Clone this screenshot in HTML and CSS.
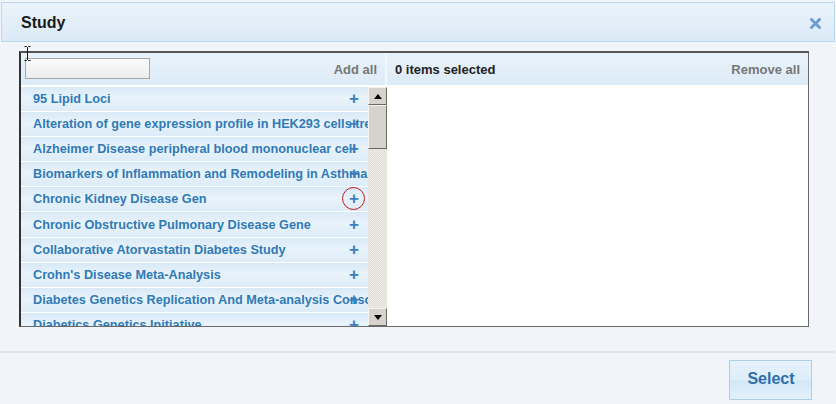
FILE: index.html
```html
<!DOCTYPE html>
<html>
<head>
<meta charset="utf-8">
<link rel="stylesheet" href="styles.css">
</head>
<body>
<div class="dialog">
  <div class="titlebar">
    <span class="title">Study</span>
    <svg class="close" width="11" height="11" viewBox="0 0 11 11"><path d="M1.5 1.5l8 8M9.5 1.5l-8 8" stroke="#6e9ecf" stroke-width="3" stroke-linecap="round"/></svg>
  </div>
  <div class="content">
    <div class="picker">
      <div class="left">
        <div class="lhead">
          <input class="search" type="text">
          <span class="addall">Add all</span>
        </div>
        <div class="listwrap">
          <div class="rows">
            <div class="row"><span class="label">95 Lipid Loci</span><span class="plus">+</span></div>
            <div class="row"><span class="label">Alteration of gene expression profile in HEK293 cells treated</span><span class="plus">+</span></div>
            <div class="row"><span class="label">Alzheimer Disease peripheral blood mononuclear cell</span><span class="plus">+</span></div>
            <div class="row"><span class="label">Biomarkers of Inflammation and Remodeling in Asthma</span><span class="plus">+</span></div>
            <div class="row"><span class="label">Chronic Kidney Disease Gen</span><span class="plus circled">+</span></div>
            <div class="row"><span class="label">Chronic Obstructive Pulmonary Disease Gene</span><span class="plus">+</span></div>
            <div class="row"><span class="label">Collaborative Atorvastatin Diabetes Study</span><span class="plus">+</span></div>
            <div class="row"><span class="label">Crohn's Disease Meta-Analysis</span><span class="plus">+</span></div>
            <div class="row"><span class="label">Diabetes Genetics Replication And Meta-analysis Consortium</span><span class="plus">+</span></div>
            <div class="row"><span class="label">Diabetics Genetics Initiative</span><span class="plus">+</span></div>
          </div>
          <div class="scrollbar">
            <div class="sbtn"><span class="arrow up"></span></div>
            <div class="thumb"></div>
            <div class="track"></div>
            <div class="sbtn"><span class="arrow down"></span></div>
          </div>
        </div>
      </div>
      <div class="right">
        <div class="rhead">
          <span class="count">0 items selected</span>
          <span class="removeall">Remove all</span>
        </div>
        <div class="selected"></div>
      </div>
    </div>
    <svg class="ibeam" width="7" height="15" viewBox="0 0 7 15"><path d="M0.5 0.5h2l1 1 1-1h2M3.5 1.5v12M0.5 14.5h2l1-1 1 1h2" fill="none" stroke="#111" stroke-width="1"/></svg>
  </div>
  <div class="footer">
    <button class="select">Select</button>
  </div>
</div>
</body>
</html>
```
FILE: styles.css
```css
html, body {
  margin: 0;
  padding: 0;
}
body {
  background: #f1f4f8;
  font-family: "Liberation Sans", Arial, sans-serif;
  width: 836px;
  height: 404px;
  overflow: hidden;
}
.dialog {
  padding-top: 2px;
}
.titlebar {
  margin: 0 1px;
  height: 38px;
  border: 1px solid #bcd8ee;
  background: linear-gradient(#eaf3fb, #dbeaf6);
  display: flex;
  align-items: center;
  justify-content: space-between;
  padding: 0 13px 0 19px;
}
.title {
  font-size: 16px;
  font-weight: bold;
  color: #1a1a1a;
  margin-top: 1px;
}
.close {
  margin-top: 3px;
}
.content {
  position: relative;
  padding: 9px 0 0 19px;
}
.picker {
  width: 787px;
  height: 273px;
  border: 1px solid #6a6a6a;
  border-left: 2px solid #333;
  border-top: 2px solid #555;
  display: flex;
  background: #fff;
}
.left {
  width: 366px;
  display: flex;
  flex-direction: column;
}
.lhead, .rhead {
  height: 32px;
  background: linear-gradient(#e9f2fa, #dcebf7);
  display: flex;
  align-items: center;
  justify-content: space-between;
  box-sizing: border-box;
  font-size: 13px;
  font-weight: bold;
}
.lhead {
  padding: 0 8px 0 4px;
  border-right: 2px solid #f4f8fc;
}
.search {
  width: 125px;
  height: 21px;
  box-sizing: border-box;
  border: 1px solid #a8a8a8;
  background: linear-gradient(#fbfbfb, #ececec);
  margin: 0 0 1px 0;
  padding: 0;
}
.addall, .removeall {
  color: #777;
}
.rhead {
  padding: 0 8px 0 8px;
}
.count {
  color: #222;
}
.right {
  flex: 1;
  display: flex;
  flex-direction: column;
}
.selected {
  flex: 1;
  background: #fff;
}
.listwrap {
  flex: 1;
  display: flex;
  overflow: hidden;
  border-top: 2px solid #fff;
}
.rows {
  width: 347px;
  overflow: hidden;
  display: flex;
  flex-direction: column;
  gap: 1px;
  background: #fff;
}
.row {
  flex: none;
  height: 24.1px;
  display: grid;
  grid-template-columns: 1fr;
  align-items: center;
  background: linear-gradient(#d8e9f7, #e9f3fb 45%, #dcecf8);
}
.label, .plus {
  grid-area: 1 / 1;
}
.label {
  padding-left: 12px;
  font-size: 12.7px;
  font-weight: bold;
  color: #2f7ab7;
  white-space: nowrap;
  overflow: hidden;
}
.plus {
  justify-self: end;
  margin-right: 6px;
  width: 16px;
  text-align: center;
  font-size: 17px;
  font-weight: bold;
  color: #3a80c0;
  line-height: 16px;
  position: relative;
}
.circled::after {
  content: "";
  position: absolute;
  left: -4px;
  top: -4px;
  width: 21px;
  height: 21px;
  border: 1.5px solid #c8181e;
  border-radius: 50%;
}
.scrollbar {
  width: 19px;
  display: flex;
  flex-direction: column;
  background: #e9e7e2;
}
.sbtn {
  flex: none;
  height: 18px;
  box-sizing: border-box;
  background: #d6d3cc;
  border: 1px solid;
  border-color: #f4f3f0 #6b6964 #6b6964 #f4f3f0;
  display: flex;
  align-items: center;
  justify-content: center;
}
.arrow {
  width: 0;
  height: 0;
  border-left: 4px solid transparent;
  border-right: 4px solid transparent;
}
.arrow.up {
  border-bottom: 5px solid #000;
}
.arrow.down {
  border-top: 5px solid #000;
}
.thumb {
  flex: none;
  height: 44px;
  box-sizing: border-box;
  background: #d6d3cc;
  border: 1px solid;
  border-color: #f4f3f0 #6b6964 #6b6964 #f4f3f0;
}
.track {
  flex: 1;
  background-color: #e6e4de;
  background-image: repeating-conic-gradient(#efeee9 0 25%, #dddbd4 0 50%);
  background-size: 2px 2px;
}
.ibeam {
  position: absolute;
  left: 24px;
  top: 4px;
}
.footer {
  margin: 24px 1px 0;
  border-top: 2px solid #e1e5ea;
  display: flex;
  justify-content: flex-end;
  padding: 7px 23px 0 0;
}
.select {
  width: 83px;
  height: 40px;
  border: 1px solid #a9cfee;
  background: linear-gradient(#e6f2fc, #ddedf9 50%, #d3e8f8 52%, #e4f1fb);
  font-family: "Liberation Sans", Arial, sans-serif;
  font-size: 16px;
  font-weight: bold;
  color: #2e6fa9;
  padding: 0 0 3px 1px;
}
```
